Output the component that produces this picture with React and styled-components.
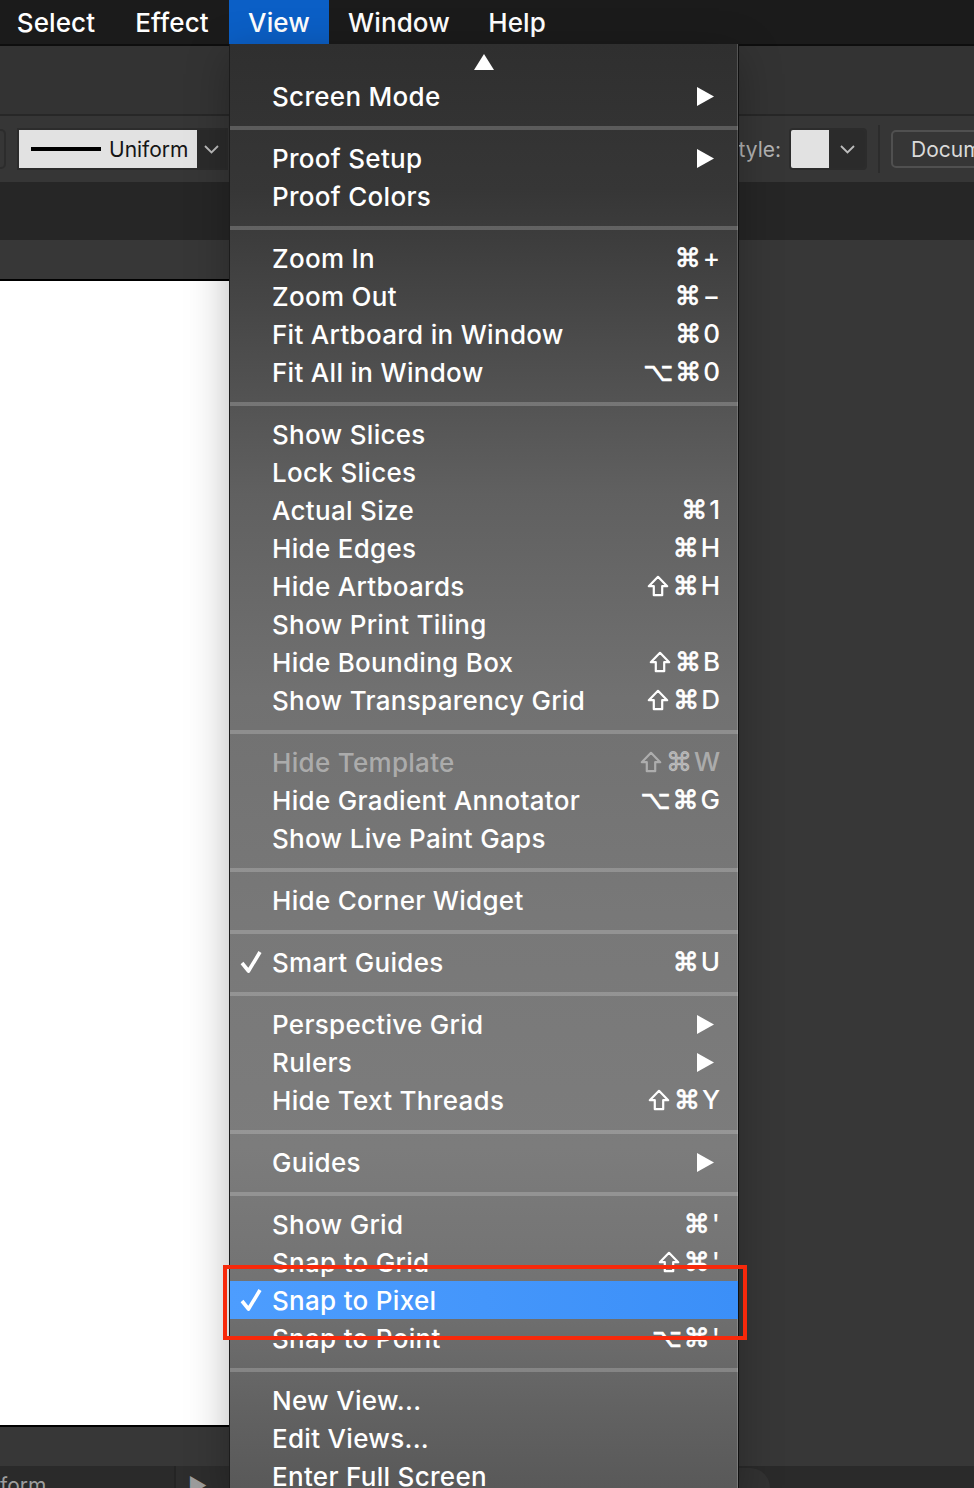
import React from 'react';
import styled, { createGlobalStyle } from 'styled-components';

const GlobalStyle = createGlobalStyle`
  html, body { margin: 0; padding: 0; background: #262626; }
  body {
    width: 974px; height: 1488px; overflow: hidden;
    font-family: Inter, "DejaVu Sans", sans-serif;
    -webkit-font-smoothing: antialiased;
  }
  * { box-sizing: border-box; }
`;

const Page = styled.div`
  position: relative;
  width: 974px;
  height: 1488px;
  overflow: hidden;
  display: flex;
  flex-direction: column;
  background: #262626;
`;

/* ---------- app menu bar ---------- */
const MenuBar = styled.div`
  flex: none;
  height: 46px;
  display: flex;
  background: #1b1b1b;
  border-bottom: 2px solid #0e0e0e;
`;
const MenuTitle = styled.div`
  flex: none;
  width: ${p => p.$w}px;
  margin-left: ${p => p.$ml || 0}px;
  display: flex;
  align-items: center;
  justify-content: center;
  color: #fff;
  font-size: 26px;
  font-weight: 500;
  letter-spacing: 0.1px;
  background: ${p => (p.$active ? '#0b5fc6' : 'transparent')};
`;

/* ---------- tool bars ---------- */
const TopToolbar = styled.div`
  flex: none;
  height: 70px;
  background: #333333;
  border-bottom: 2px solid #272727;
`;
const ControlBar = styled.div`
  flex: none;
  height: 66px;
  background: #363636;
  display: flex;
  align-items: center;
  overflow: hidden;
  font-family: Inter, "Open Sans", sans-serif;
`;
const StubBox = styled.div`
  flex: none;
  width: 36px;
  height: 40px;
  margin-left: -30px;
  border: 2px solid #2c2c2c;
  border-radius: 5px;
  background: #363636;
`;
const StrokeGroup = styled.div`
  flex: none;
  margin-left: 11px;
  width: 211px;
  height: 42px;
  display: flex;
  border: 2px solid #2c2c2c;
  background: #2c2c2c;
`;
const StrokeField = styled.div`
  flex: none;
  width: 178px;
  background: #e2e2e2;
  display: flex;
  align-items: center;
  padding-left: 12px;
  gap: 8px;
  color: #151515;
  font-size: 21px;
`;
const StrokeLine = styled.span`
  width: 70px;
  height: 4px;
  background: #000;
`;
const ChevronCell = styled.div`
  flex: 1;
  display: flex;
  align-items: center;
  justify-content: center;
  background: #2b2b2b;
`;
const RightCluster = styled.div`
  flex: none;
  margin-left: 497px;
  display: flex;
  align-items: center;
`;
const FieldLabel = styled.div`
  width: 55px;
  text-align: right;
  color: #b3b3b3;
  font-size: 21px;
`;
const SwatchGroup = styled.div`
  margin-left: 9px;
  width: 78px;
  height: 42px;
  display: flex;
  border: 2px solid #2c2c2c;
  border-radius: 4px;
  overflow: hidden;
`;
const Swatch = styled.div`
  width: 38px;
  background: #e2e2e2;
`;
const VSep = styled.div`
  margin-left: 11px;
  width: 2px;
  height: 48px;
  background: #2c2c2c;
`;
const DocButton = styled.div`
  margin-left: 11px;
  width: 190px;
  height: 38px;
  border: 2px solid #505050;
  border-radius: 5px;
  color: #dadada;
  font-size: 21px;
  display: flex;
  align-items: center;
  padding-left: 18px;
`;
const TabBar = styled.div`
  flex: none;
  height: 58px;
  background: #262626;
`;

/* ---------- canvas ---------- */
const Pasteboard = styled.div`
  flex: none;
  height: 1226px;
  background: #373737;
  padding-top: 39px;
`;
const Artboard = styled.div`
  margin-left: -4px;
  width: 500px;
  height: 1148px;
  background: #ffffff;
  border-top: 2px solid #000;
  border-bottom: 2px solid #000;
`;

/* ---------- status bar ---------- */
const StatusBar = styled.div`
  flex: none;
  height: 40px;
  background: #2a2a2a;
  display: flex;
  align-items: flex-start;
  color: #9d9d9d;
  font-size: 21px;
`;
const StatusText = styled.div`
  width: 174px;
  padding-top: 8px;
  line-height: 24px;
`;
const NavGroup = styled.div`
  display: flex;
  align-items: flex-start;
  gap: 22px;
  padding: 10px 0 0 12px;
  height: 40px;
  border-left: 2px solid #242424;
  background: #2d2d2d;
  width: 90px;
  line-height: 20px;
`;
const ScrollPill = styled.div`
  margin-left: auto;
  margin-right: 204px;
  margin-top: 2px;
  width: 300px;
  height: 40px;
  border-radius: 20px;
  background: #323232;
`;

/* ---------- dropdown menu ---------- */
const Menu = styled.div`
  position: absolute;
  left: 229px;
  top: 44px;
  width: 510px;
  border-left: 1px solid #1c1c1c;
  border-right: 1px solid #101010;
  background: linear-gradient(
    180deg,
    #2f2f2f 0%,
    #363636 10%,
    #4a4a4a 20%,
    #606060 31%,
    #717171 45%,
    #787878 60%,
    #7c7c7c 76%,
    #727272 86%,
    #626262 94%,
    #585858 100%
  );
  box-shadow: inset -1px 0 0 rgba(255, 255, 255, 0.18), 0 10px 40px rgba(0, 0, 0, 0.28);
  color: #fff;
  font-size: 26px;
  font-weight: 500;
  font-family: Inter, "DejaVu Sans", sans-serif;
  letter-spacing: 0.3px;
`;
const ScrollCap = styled.div`
  height: 33px;
  display: flex;
  justify-content: center;
  align-items: flex-start;
  padding-top: 10px;
`;
const Sep = styled.div`
  height: 4px;
  margin: 11px 0 9px;
  background: rgba(255, 255, 255, 0.2);
`;
const Row = styled.div`
  height: 38px;
  display: flex;
  align-items: center;
  padding-right: 18px;
  color: ${p => (p.$disabled ? 'rgba(255,255,255,0.42)' : '#fff')};
  background: ${p => (p.$selected ? 'linear-gradient(90deg, #4d9dfe, #3b8ff8)' : 'transparent')};
`;
const Gutter = styled.div`
  flex: none;
  width: 42px;
  display: flex;
  justify-content: center;
  align-items: center;
`;
const Label = styled.div`
  flex: 1;
  white-space: nowrap;
`;
const Shortcut = styled.div`
  flex: none;
  white-space: nowrap;
  display: flex;
  align-items: center;
  gap: 2px;
  letter-spacing: 0;
`;
const KeyGlyph = styled.span`
  font-family: "DejaVu Sans", sans-serif;
  font-size: 26px;
  font-weight: 400;
  line-height: 1;
  -webkit-text-stroke: 0.7px currentColor;
`;
const KeyChar = styled.span`
  font-size: 26px;
  line-height: 1;
`;
const Annotation = styled.div`
  position: absolute;
  left: 223px;
  top: 1265px;
  width: 524px;
  height: 75px;
  border: 4px solid #f7290b;
  pointer-events: none;
`;

const Chevron = () => (
  <svg width="15" height="9" viewBox="0 0 15 9">
    <polyline points="1,1 7.5,7.5 14,1" fill="none" stroke="#bdbdbd" strokeWidth="1.8" />
  </svg>
);
const UpTriangle = () => (
  <svg width="20" height="16" viewBox="0 0 20 16">
    <polygon points="10,0 20,16 0,16" fill="#fff" />
  </svg>
);
const SubArrow = () => (
  <svg width="17" height="19" viewBox="0 0 17 19" style={{ marginRight: 6 }}>
    <polygon points="0,0 17,9.5 0,19" fill="#fff" />
  </svg>
);
const Check = () => (
  <svg width="22" height="24" viewBox="0 0 22 24">
    <polyline points="2,13 8.5,21 20,2" fill="none" stroke="#fff" strokeWidth="3.6" strokeLinejoin="round" />
  </svg>
);
const ShiftIcon = () => (
  <svg width="22" height="22" viewBox="0 0 22 22" style={{ marginRight: 2 }}>
    <path
      d="M11 1.8 L20.2 11.2 H15.2 V20.2 H6.8 V11.2 H1.8 Z"
      fill="none"
      stroke="currentColor"
      strokeWidth="2.2"
      strokeLinejoin="round"
    />
  </svg>
);

const MOD = new Set(['⌘', '⌥']);
const KeyCombo = ({ keys }) => (
  <Shortcut>
    {[...keys].map((c, i) =>
      c === '⇧' ? (
        <ShiftIcon key={i} />
      ) : MOD.has(c) ? (
        <KeyGlyph key={i}>{c}</KeyGlyph>
      ) : (
        <KeyChar key={i}>{c}</KeyChar>
      )
    )}
  </Shortcut>
);

const groups = [
  [{ l: 'Screen Mode', sub: true }],
  [{ l: 'Proof Setup', sub: true }, { l: 'Proof Colors' }],
  [
    { l: 'Zoom In', k: '⌘+' },
    { l: 'Zoom Out', k: '⌘−' },
    { l: 'Fit Artboard in Window', k: '⌘0' },
    { l: 'Fit All in Window', k: '⌥⌘0' },
  ],
  [
    { l: 'Show Slices' },
    { l: 'Lock Slices' },
    { l: 'Actual Size', k: '⌘1' },
    { l: 'Hide Edges', k: '⌘H' },
    { l: 'Hide Artboards', k: '⇧⌘H' },
    { l: 'Show Print Tiling' },
    { l: 'Hide Bounding Box', k: '⇧⌘B' },
    { l: 'Show Transparency Grid', k: '⇧⌘D' },
  ],
  [
    { l: 'Hide Template', k: '⇧⌘W', dis: true },
    { l: 'Hide Gradient Annotator', k: '⌥⌘G' },
    { l: 'Show Live Paint Gaps' },
  ],
  [{ l: 'Hide Corner Widget' }],
  [{ l: 'Smart Guides', k: '⌘U', chk: true }],
  [
    { l: 'Perspective Grid', sub: true },
    { l: 'Rulers', sub: true },
    { l: 'Hide Text Threads', k: '⇧⌘Y' },
  ],
  [{ l: 'Guides', sub: true }],
  [
    { l: 'Show Grid', k: "⌘'" },
    { l: 'Snap to Grid', k: "⇧⌘'" },
    { l: 'Snap to Pixel', chk: true, sel: true },
    { l: 'Snap to Point', k: "⌥⌘'" },
  ],
  [{ l: 'New View...' }, { l: 'Edit Views...' }, { l: 'Enter Full Screen' }],
];

export default function App() {
  return (
    <Page>
      <GlobalStyle />
      <MenuBar>
        <MenuTitle $w={118} $ml={-3}>Select</MenuTitle>
        <MenuTitle $w={114}>Effect</MenuTitle>
        <MenuTitle $w={100} $active>View</MenuTitle>
        <MenuTitle $w={140}>Window</MenuTitle>
        <MenuTitle $w={96}>Help</MenuTitle>
      </MenuBar>
      <TopToolbar />
      <ControlBar>
        <StubBox />
        <StrokeGroup>
          <StrokeField>
            <StrokeLine />
            Uniform
          </StrokeField>
          <ChevronCell>
            <Chevron />
          </ChevronCell>
        </StrokeGroup>
        <RightCluster>
          <FieldLabel>Style:</FieldLabel>
          <SwatchGroup>
            <Swatch />
            <ChevronCell>
              <Chevron />
            </ChevronCell>
          </SwatchGroup>
          <VSep />
          <DocButton>Document Setup</DocButton>
        </RightCluster>
      </ControlBar>
      <TabBar />
      <Pasteboard>
        <Artboard />
      </Pasteboard>
      <StatusBar>
        <StatusText>form</StatusText>
        <NavGroup>
          <span>▶</span>
          <span>‹</span>
        </NavGroup>
        <ScrollPill />
      </StatusBar>

      <Menu>
        <ScrollCap>
          <UpTriangle />
        </ScrollCap>
        {groups.map((g, gi) => (
          <React.Fragment key={gi}>
            {gi > 0 && <Sep />}
            {g.map(it => (
              <Row key={it.l} $disabled={it.dis} $selected={it.sel}>
                <Gutter>{it.chk && <Check />}</Gutter>
                <Label>{it.l}</Label>
                {it.k && <KeyCombo keys={it.k} />}
                {it.sub && <SubArrow />}
              </Row>
            ))}
          </React.Fragment>
        ))}
      </Menu>
      <Annotation />
    </Page>
  );
}
